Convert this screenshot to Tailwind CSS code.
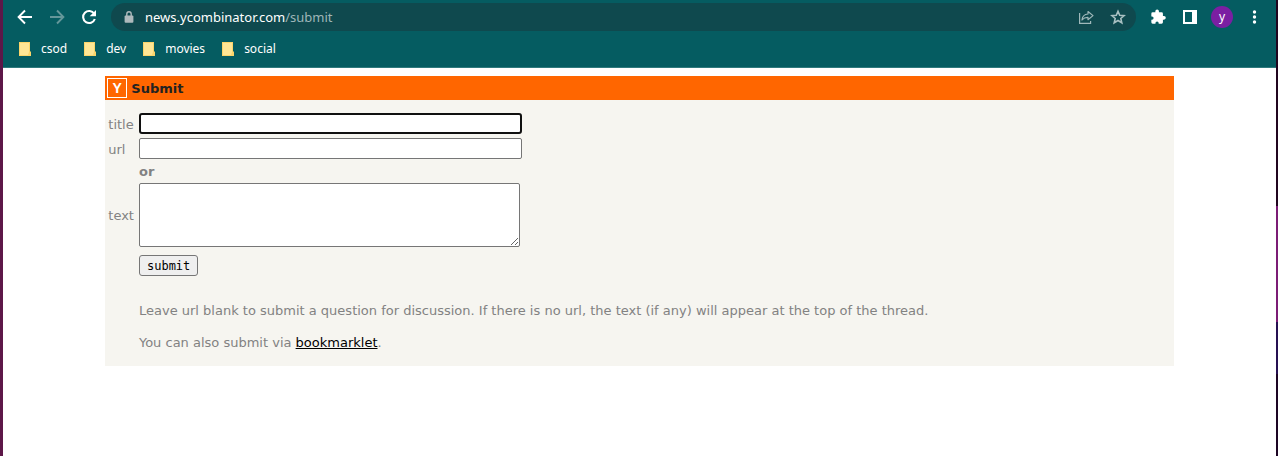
<!DOCTYPE html>
<html lang="en">
<head>
<meta charset="utf-8">
<title>Submit | Hacker News</title>
<script src="https://cdn.jsdelivr.net/npm/@tailwindcss/browser@4"></script>
</head>
<body class="flex min-h-screen bg-white">
<div class="w-[3px] shrink-0 bg-[#5d1748]"></div>
<div class="min-w-0 grow">
  <header class="border-b border-[#2f7a7d] bg-[#055c61] font-['Noto_Sans','Open_Sans',sans-serif] text-xs text-white">
    <div class="flex h-[34px] items-center pr-[14px] pl-[14px]">
      <button type="button" aria-label="Back" class="mr-4"><svg class="size-4" viewBox="0 0 16 16" fill="none" stroke="#fff" stroke-width="1.9"><path d="M15 8H2M8 1.5 1.6 8 8 14.5"/></svg></button>
      <button type="button" aria-label="Forward" class="mr-4"><svg class="size-4" viewBox="0 0 16 16" fill="none" stroke="#64979a" stroke-width="1.9"><path d="M1 8h13M8 1.5 14.4 8 8 14.5"/></svg></button>
      <button type="button" aria-label="Reload" class="mr-[14px]"><svg class="size-4" viewBox="0 0 16 16"><path d="M13.2 4.8A6 6 0 1 0 13.8 10" fill="none" stroke="#fff" stroke-width="2.1"/><path d="M15 1v6.3H8.7z" fill="#fff"/></svg></button>
      <div class="flex h-7 min-w-0 grow items-center rounded-full bg-[#0f494e] pr-[10px] pl-3">
        <svg class="mr-[10px] h-3 w-3 shrink-0" viewBox="0 0 12 12"><rect x="1.6" y="4.4" width="8.8" height="7.4" rx="1" fill="#aeb9bc"/><path d="M3.8 5V3a2.2 2.2 0 0 1 4.4 0v2" fill="none" stroke="#aeb9bc" stroke-width="1.4"/></svg>
        <span class="grow pt-[2px] text-[13px]">news.ycombinator.com<span class="text-[#9fb6b8]">/submit</span></span>
        <button type="button" aria-label="Share" class="mr-4"><svg class="size-4" viewBox="0 0 16 16" fill="none" stroke="#9fb8ba" stroke-width="1.2"><path d="M1.6 4v10.4h11V12"/><path d="M10 2.5 15 6.6l-5 4.1V8.4c-2.6-.1-4.4.6-6 2.6.3-3.4 2.4-5.7 6-6z" stroke-linejoin="round"/></svg></button>
        <button type="button" aria-label="Bookmark this page"><svg class="size-4" viewBox="0 0 16 16" fill="none" stroke="#a9c0c2" stroke-width="1.6"><path d="m8 2.2 1.7 4 4.4.4-3.3 2.9 1 4.3L8 11.5l-3.8 2.3 1-4.3-3.3-2.9 4.4-.4z"/></svg></button>
      </div>
      <button type="button" aria-label="Extensions" class="ml-[14px]"><svg class="size-4" viewBox="0 0 24 24" fill="#fff"><path d="M21 10.600H19.400V7a2 2 0 0 0-2-2H13.400V3.500a2.700 2.700 0 0 0-5.400 0V5H4a2 2 0 0 0-2 2v4.200h1a2.400 2.400 0 0 1 0 4.800H2V20a2 2 0 0 0 2 2h4.200v-1a2.400 2.400 0 0 1 4.800 0v1h4.400a2 2 0 0 0 2-2v-4H21a2.700 2.700 0 0 0 0-5.400z"/></svg></button>
      <button type="button" aria-label="Side panel" class="ml-[17px]"><svg class="h-[14px] w-[14px]" viewBox="0 0 14 14"><path d="M1 1h12v12H1z" fill="none" stroke="#fff" stroke-width="2"/><path d="M9 0h5v14H9z" fill="#fff"/></svg></button>
      <button type="button" aria-label="Profile" class="ml-[14px] flex size-[22px] items-center justify-center rounded-full bg-[#7b1fa2] leading-none">y</button>
      <button type="button" aria-label="Menu" class="ml-[13px]"><svg class="h-[14px] w-4" viewBox="0 0 16 14" fill="#fff"><circle cx="8.5" cy="2" r="1.7"/><circle cx="8.5" cy="7" r="1.7"/><circle cx="8.5" cy="12" r="1.7"/></svg></button>
    </div>
    <nav class="flex h-[33px] items-start gap-[17px] pt-[6px] pl-4 leading-[18px]">
      <a href="#csod" class="flex items-center gap-[10px]"><svg class="h-[14px] w-3" viewBox="0 0 12 14"><path d="M0 0h11v9.5h1V14H0z" fill="#fbd56b"/><path d="M1 1h9v9l-1 3H1z" fill="#ffe695"/></svg>csod</a>
      <a href="#dev" class="flex items-center gap-[10px]"><svg class="h-[14px] w-3" viewBox="0 0 12 14"><path d="M0 0h11v9.5h1V14H0z" fill="#fbd56b"/><path d="M1 1h9v9l-1 3H1z" fill="#ffe695"/></svg>dev</a>
      <a href="#movies" class="flex items-center gap-[10px]"><svg class="h-[14px] w-3" viewBox="0 0 12 14"><path d="M0 0h11v9.5h1V14H0z" fill="#fbd56b"/><path d="M1 1h9v9l-1 3H1z" fill="#ffe695"/></svg>movies</a>
      <a href="#social" class="flex items-center gap-[10px]"><svg class="h-[14px] w-3" viewBox="0 0 12 14"><path d="M0 0h11v9.5h1V14H0z" fill="#fbd56b"/><path d="M1 1h9v9l-1 3H1z" fill="#ffe695"/></svg>social</a>
    </nav>
  </header>
  <div class="p-2 font-[Verdana,'DejaVu_Sans',sans-serif] text-[13px] leading-4 text-[#828282]">
    <main class="mx-auto w-[85%] bg-[#f6f5f0]">
      <div class="flex h-6 items-center gap-1 bg-[#ff6600] pl-[2px]">
        <a href="#home" class="flex size-5 items-center justify-center border border-white font-['Liberation_Sans',Arial,sans-serif] text-sm font-bold text-white">Y</a>
        <h1 class="pt-[2px] font-bold text-[#222222]">Submit</h1>
      </div>
      <form class="grid grid-cols-[auto_1fr] items-center gap-x-[5px] px-[3px] pt-[13px] pb-[15px]">
        <label for="title" class="pb-[2px]">title</label>
        <input id="title" type="text" class="mb-1 h-[21px] w-[383px] max-w-full rounded-[3px] border-2 border-[#101010] bg-white px-1 font-[Consolas,'DejaVu_Sans_Mono',monospace] text-black outline-none">
        <label for="url" class="pt-[2px]">url</label>
        <input id="url" type="text" class="h-[21px] w-[383px] max-w-full rounded-[2px] border border-[#767676] bg-white px-1 font-[Consolas,'DejaVu_Sans_Mono',monospace] text-black outline-none">
        <b class="col-start-2 mt-[5px] mb-[3px]">or</b>
        <label for="text" class="pt-[2px]">text</label>
        <textarea id="text" class="h-16 w-[381px] max-w-full resize rounded-[2px] border border-[#767676] bg-white p-1 font-[Consolas,'DejaVu_Sans_Mono',monospace] text-black outline-none"></textarea>
        <button type="submit" class="col-start-2 mt-2 h-[21px] justify-self-start rounded-[3px] border border-[#767676] bg-[#efefef] px-[7px] font-[Consolas,'DejaVu_Sans_Mono',monospace] text-xs text-black">submit</button>
        <p class="col-start-2 mt-[27px]">Leave url blank to submit a question for discussion. If there is no url, the text (if any) will appear at the top of the thread.</p>
        <p class="col-start-2 mt-4">You can also submit via <a href="#bookmarklet" class="text-black underline">bookmarklet</a>.</p>
      </form>
    </main>
  </div>
</div>
<div class="flex w-[2px] shrink-0 flex-col">
  <div class="h-[206px] bg-[#21051f]"></div>
  <div class="h-[116px] bg-[#7c1c75]"></div>
  <div class="h-[52px] bg-[#261052]"></div>
  <div class="grow bg-[#1d0524]"></div>
</div>
</body>
</html>
